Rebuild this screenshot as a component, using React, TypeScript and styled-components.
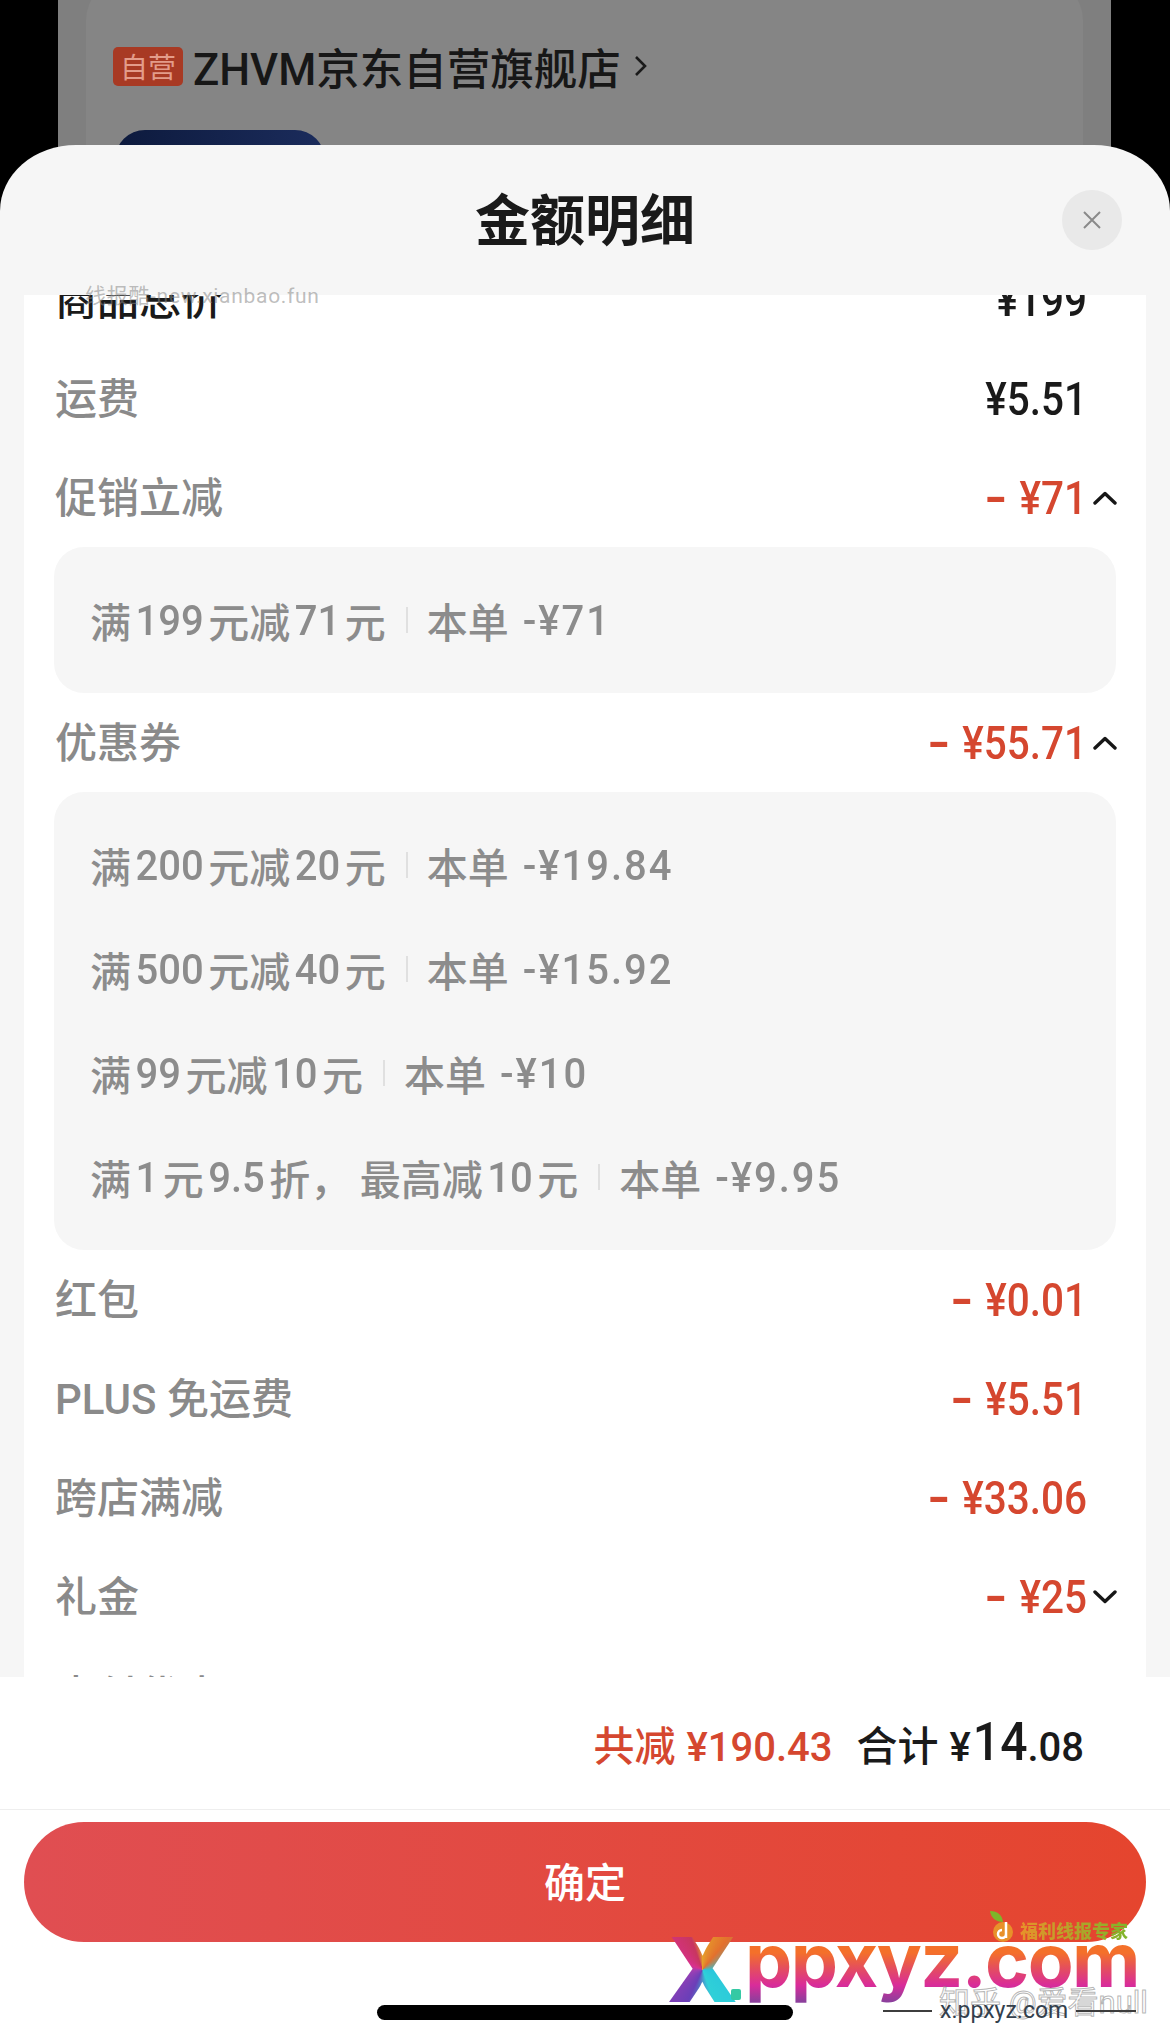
import styled, { createGlobalStyle } from 'styled-components';

const GlobalStyle = createGlobalStyle`
  html, body {
    margin: 0;
    padding: 0;
    background: #000;
  }
  * {
    box-sizing: border-box;
  }
`;

const FONT = `Roboto, "Noto Sans CJK SC", sans-serif`;

const Page = styled.div`
  position: relative;
  width: 1170px;
  height: 2043px;
  overflow: hidden;
  background: #000;
  font-family: ${FONT};
`;

const Backdrop = styled.div`
  height: 100%;
  margin: 0 59px 0 58px;
  padding: 0 28px;
  background: #7f7f7f;
`;

const StoreCard = styled.div`
  height: 100%;
  margin-top: -20px;
  padding: 66px 27px 0;
  border-radius: 40px 40px 0 0;
  background: #858585;
`;

const StoreRow = styled.div`
  display: flex;
  align-items: center;
  height: 40px;
  column-gap: 10px;
`;

const SelfBadge = styled.span`
  display: flex;
  align-items: center;
  justify-content: center;
  width: 70px;
  height: 39px;
  border-radius: 5px;
  background: #a83a24;
  color: #e39c8a;
  font-size: 28px;
`;

const StoreName = styled.span`
  color: #171717;
  font-size: 43.5px;
  font-weight: 500;
  white-space: nowrap;
`;

const StoreArrow = styled.svg`
  margin-left: 3px;
`;

const MemberCard = styled.div`
  width: 210px;
  height: 80px;
  margin: 44px 0 0 2px;
  border-radius: 30px 30px 0 0;
  background: linear-gradient(90deg, #0d1a3d, #1b2c5c);
`;

const Sheet = styled.div`
  position: absolute;
  top: 145px;
  left: 0;
  right: 0;
  bottom: 0;
  display: flex;
  flex-direction: column;
  border-radius: 76px 76px 0 0 / 66px 66px 0 0;
  background: #f6f6f6;
`;

const SheetHeader = styled.div`
  position: relative;
  flex: none;
  display: flex;
  align-items: center;
  justify-content: center;
  height: 150px;
`;

const SheetTitle = styled.h1`
  margin: 3px 0 0;
  color: #1a1a1a;
  font-size: 55px;
  font-weight: 700;
  line-height: 1;
`;

const CloseButton = styled.button`
  position: absolute;
  top: 45px;
  right: 48px;
  display: flex;
  align-items: center;
  justify-content: center;
  width: 60px;
  height: 60px;
  padding: 0;
  border: none;
  border-radius: 50%;
  background: #e9e9e9;
`;

const DetailArea = styled.div`
  flex: 1;
  min-height: 0;
  margin: 0 24px;
  overflow: hidden;
  background: #fff;
`;

const DetailList = styled.div`
  margin-top: -45px;
`;

const Row = styled.div`
  display: flex;
  align-items: center;
  justify-content: space-between;
  height: 99px;
  padding: 0 29px 0 31px;
`;

const RowLabel = styled.span<{ $strong?: boolean }>`
  margin-bottom: 6px;
  color: ${(p) => (p.$strong ? '#1a1a1a' : '#8a8a8a')};
  font-size: 42px;
  font-weight: 500;
`;

const RowRight = styled.div`
  display: flex;
  align-items: center;
`;

// the app's digits are taller and slimmer than Roboto's, hence the scaleY
const Amount = styled.span<{ $minus?: boolean }>`
  display: inline-block;
  color: ${(p) => (p.$minus ? '#d5472f' : '#1a1a1a')};
  font-size: 40.5px;
  font-weight: 500;
  transform: scaleY(1.12);
  white-space: pre;
`;

const MinusSign = styled.span`
  display: inline-block;
  width: 35px;
  font-weight: 700;
  transform: scaleX(1.5);
  transform-origin: left center;
`;

const ArrowSlot = styled.span`
  display: flex;
  justify-content: flex-end;
  width: 30px;
`;

const OfferPanel = styled.div`
  margin: 0 30px;
  padding: 21px 36px 21px;
  border-radius: 30px;
  background: #f6f6f6;
`;

const OfferLine = styled.div`
  display: flex;
  align-items: center;
  height: 104px;
  color: #8c8c8c;
  font-size: 41px;
  font-weight: 500;
  white-space: nowrap;
`;

const OfferNum = styled.span<{ $tight?: boolean }>`
  display: inline-block;
  margin: 0 ${(p) => (p.$tight ? 4.5 : 0)}px;
  font-size: 40px;
  letter-spacing: ${(p) => (p.$tight ? 0 : 2)}px;
  transform: scaleY(1.08);
`;

const OfferDivider = styled.span`
  width: 2px;
  height: 26px;
  margin: 0 19px 0 20px;
  background: #e0e0e0;
`;

const SavedLabel = styled.span`
  margin-right: 14px;
`;

const SheetFooter = styled.div`
  flex: none;
  padding-bottom: 23px;
  background: #fff;
`;

const TotalBar = styled.div`
  display: flex;
  align-items: center;
  justify-content: flex-end;
  column-gap: 24px;
  height: 133px;
  padding-right: 86px;
  border-bottom: 1px solid #eee;
  white-space: nowrap;
`;

const SavedText = styled.span`
  display: flex;
  align-items: baseline;
  column-gap: 11px;
  color: #d5472f;
  font-size: 41px;
  font-weight: 500;
`;

const TotalText = styled.span`
  display: flex;
  align-items: baseline;
  column-gap: 11px;
  color: #1a1a1a;
  font-size: 41px;
  font-weight: 500;
`;

const TotalNum = styled.span`
  font-size: 40px;
`;

const TotalWhole = styled.span`
  display: inline-block;
  margin-left: 2px;
  font-size: 48px;
  transform: scaleY(1.1);
  transform-origin: center bottom;
`;

const ConfirmButton = styled.button`
  display: block;
  width: 1122px;
  height: 120px;
  margin: 12px 24px 0;
  padding: 0 0 5px;
  border: none;
  border-radius: 60px;
  background: linear-gradient(90deg, #e04e52, #e5452e);
  color: #fff;
  font-family: ${FONT};
  font-size: 41px;
  font-weight: 500;
`;

const HomeBar = styled.div`
  width: 416px;
  height: 15px;
  margin: 63px auto 0;
  border-radius: 8px;
  background: #000;
`;

const TopStamp = styled.div`
  position: absolute;
  top: 279px;
  left: 85px;
  color: rgba(135, 135, 135, 0.55);
  font-size: 21px;
  letter-spacing: 0.7px;
  white-space: nowrap;
`;

const LogoX = styled.div`
  position: absolute;
  top: 1920px;
  left: 667px;
  background: conic-gradient(
    from 0deg at 50% 50%,
    #e6a02a 0deg,
    #e3702d 40deg,
    #29c6dc 95deg,
    #2fd0d8 160deg,
    #6a3fb8 205deg,
    #9c3fb4 260deg,
    #d9308f 290deg,
    #c8365f 340deg,
    #e6a02a 360deg
  );
  background-clip: text;
  -webkit-background-clip: text;
  color: transparent;
  font-family: Inter, sans-serif;
  font-size: 90px;
  font-weight: 900;
  line-height: 1.1;
`;

const LogoDot = styled.div`
  position: absolute;
  top: 1989px;
  left: 731px;
  width: 10px;
  height: 11px;
  border-radius: 2px;
  background: #35c9a4;
`;

const LogoWord = styled.div`
  position: absolute;
  top: 1915px;
  left: 745px;
  background: linear-gradient(180deg, #f4702a 42%, #e5505a 58%, #d92c9a 78%, #8c3f9c 96%);
  background-clip: text;
  -webkit-background-clip: text;
  color: transparent;
  font-family: Inter, sans-serif;
  font-size: 75px;
  font-weight: 700;
  letter-spacing: -1.6px;
  line-height: 90px;
  white-space: nowrap;
`;

const PromoMark = styled.div`
  position: absolute;
  top: 1909px;
  left: 988px;
  display: flex;
  align-items: flex-end;
  column-gap: 2px;
`;

const PromoText = styled.span`
  background: linear-gradient(90deg, #e8912a, #7fb52a);
  background-clip: text;
  -webkit-background-clip: text;
  color: transparent;
  font-size: 18px;
  font-weight: 900;
  line-height: 26px;
  white-space: nowrap;
`;

const OutlineStamp = styled.div`
  position: absolute;
  top: 1987px;
  left: 939px;
  color: rgba(255, 255, 255, 0.55);
  font-size: 31px;
  line-height: 32px;
  white-space: nowrap;
  -webkit-text-stroke: 1px rgba(150, 150, 150, 0.7);
`;

const SiteStamp = styled.div`
  position: absolute;
  top: 1998px;
  left: 883px;
  display: flex;
  align-items: center;
  column-gap: 8px;
  color: #33404c;
  font-size: 23px;
  line-height: 26px;
`;

const StampRule = styled.span<{ $w: number }>`
  width: ${(p) => p.$w}px;
  height: 2px;
  background: #3d3d3d;
`;

type Offer = { rule: string; saved: string };

const PROMOS: Offer[] = [{ rule: '满199元减71元', saved: '-¥71' }];

const COUPONS: Offer[] = [
  { rule: '满200元减20元', saved: '-¥19.84' },
  { rule: '满500元减40元', saved: '-¥15.92' },
  { rule: '满99元减10元', saved: '-¥10' },
  { rule: '满1元9.5折，\u2009最高减10元', saved: '-¥9.95' },
];

function Chevron({ up }: { up?: boolean }) {
  return (
    <svg width="24" height="14" viewBox="0 0 24 14" fill="none">
      <polyline
        points={up ? '2,12 12,2.5 22,12' : '2,2 12,11.5 22,2'}
        stroke="#161616"
        strokeWidth="3.4"
        strokeLinecap="round"
        strokeLinejoin="round"
      />
    </svg>
  );
}

function DetailRow({
  label,
  amount,
  minus,
  arrow,
  strong,
}: {
  label: string;
  amount?: string;
  minus?: boolean;
  arrow?: 'up' | 'down';
  strong?: boolean;
}) {
  return (
    <Row>
      <RowLabel $strong={strong}>{label}</RowLabel>
      <RowRight>
        <Amount $minus={minus}>
          {minus && <MinusSign>-</MinusSign>}
          {amount}
        </Amount>
        <ArrowSlot>{arrow && <Chevron up={arrow === 'up'} />}</ArrowSlot>
      </RowRight>
    </Row>
  );
}

function RuleText({ text }: { text: string }) {
  return (
    <>
      {text.split(/([\d.]+)/).map((part, index) =>
        /\d/.test(part) ? (
          <OfferNum key={index} $tight>
            {part}
          </OfferNum>
        ) : (
          <span key={index}>{part}</span>
        ),
      )}
    </>
  );
}

function OfferList({ offers }: { offers: Offer[] }) {
  return (
    <OfferPanel>
      {offers.map((offer) => (
        <OfferLine key={offer.rule}>
          <RuleText text={offer.rule} />
          <OfferDivider />
          <SavedLabel>本单</SavedLabel>
          <OfferNum>{offer.saved}</OfferNum>
        </OfferLine>
      ))}
    </OfferPanel>
  );
}

export default function App() {
  return (
    <Page>
      <GlobalStyle />
      <Backdrop>
        <StoreCard>
          <StoreRow>
            <SelfBadge>自营</SelfBadge>
            <StoreName>ZHVM京东自营旗舰店</StoreName>
            <StoreArrow width="14" height="24" viewBox="0 0 14 24" fill="none">
              <polyline points="2,3 11,12 2,21" stroke="#1a1a1a" strokeWidth="2.6" />
            </StoreArrow>
          </StoreRow>
          <MemberCard />
        </StoreCard>
      </Backdrop>

      <Sheet>
        <SheetHeader>
          <SheetTitle>金额明细</SheetTitle>
          <CloseButton aria-label="关闭">
            <svg width="20" height="20" viewBox="0 0 20 20" fill="none">
              <path d="M2 2 18 18M18 2 2 18" stroke="#8a8a8a" strokeWidth="2" />
            </svg>
          </CloseButton>
        </SheetHeader>

        <DetailArea>
          <DetailList>
            <DetailRow label="商品总价" amount="¥199" strong />
            <DetailRow label="运费" amount="¥5.51" />
            <DetailRow label="促销立减" amount="¥71" minus arrow="up" />
            <OfferList offers={PROMOS} />
            <DetailRow label="优惠券" amount="¥55.71" minus arrow="up" />
            <OfferList offers={COUPONS} />
            <DetailRow label="红包" amount="¥0.01" minus />
            <DetailRow label="PLUS 免运费" amount="¥5.51" minus />
            <DetailRow label="跨店满减" amount="¥33.06" minus />
            <DetailRow label="礼金" amount="¥25" minus arrow="down" />
            <DetailRow label="支付优惠" />
          </DetailList>
        </DetailArea>

        <SheetFooter>
          <TotalBar>
            <SavedText>
              共减 <TotalNum>¥190.43</TotalNum>
            </SavedText>
            <TotalText>
              合计
              <TotalNum>
                ¥<TotalWhole>14</TotalWhole>.08
              </TotalNum>
            </TotalText>
          </TotalBar>
          <ConfirmButton>确定</ConfirmButton>
          <HomeBar />
        </SheetFooter>
      </Sheet>

      <TopStamp>线报酷-new.xianbao.fun</TopStamp>

      <PromoMark>
        <svg width="30" height="36" viewBox="0 0 30 36" fill="none">
          <path d="M2 2C10 2 14 6 15 13 8 13 3 9 2 2Z" fill="#7fb52a" />
          <circle cx="15" cy="23" r="10" fill="#e8912a" />
          <path d="M18 13V29M18 25A4 4 0 1 1 14 21" stroke="#fff" strokeWidth="2.5" />
        </svg>
        <PromoText>福利线报专家</PromoText>
      </PromoMark>
      <LogoX>X</LogoX>
      <LogoDot />
      <LogoWord>ppxyz.com</LogoWord>
      <OutlineStamp>知乎 @爱看null</OutlineStamp>
      <SiteStamp>
        <StampRule $w={49} />
        x.ppxyz.com
        <StampRule $w={60} />
      </SiteStamp>
    </Page>
  );
}
